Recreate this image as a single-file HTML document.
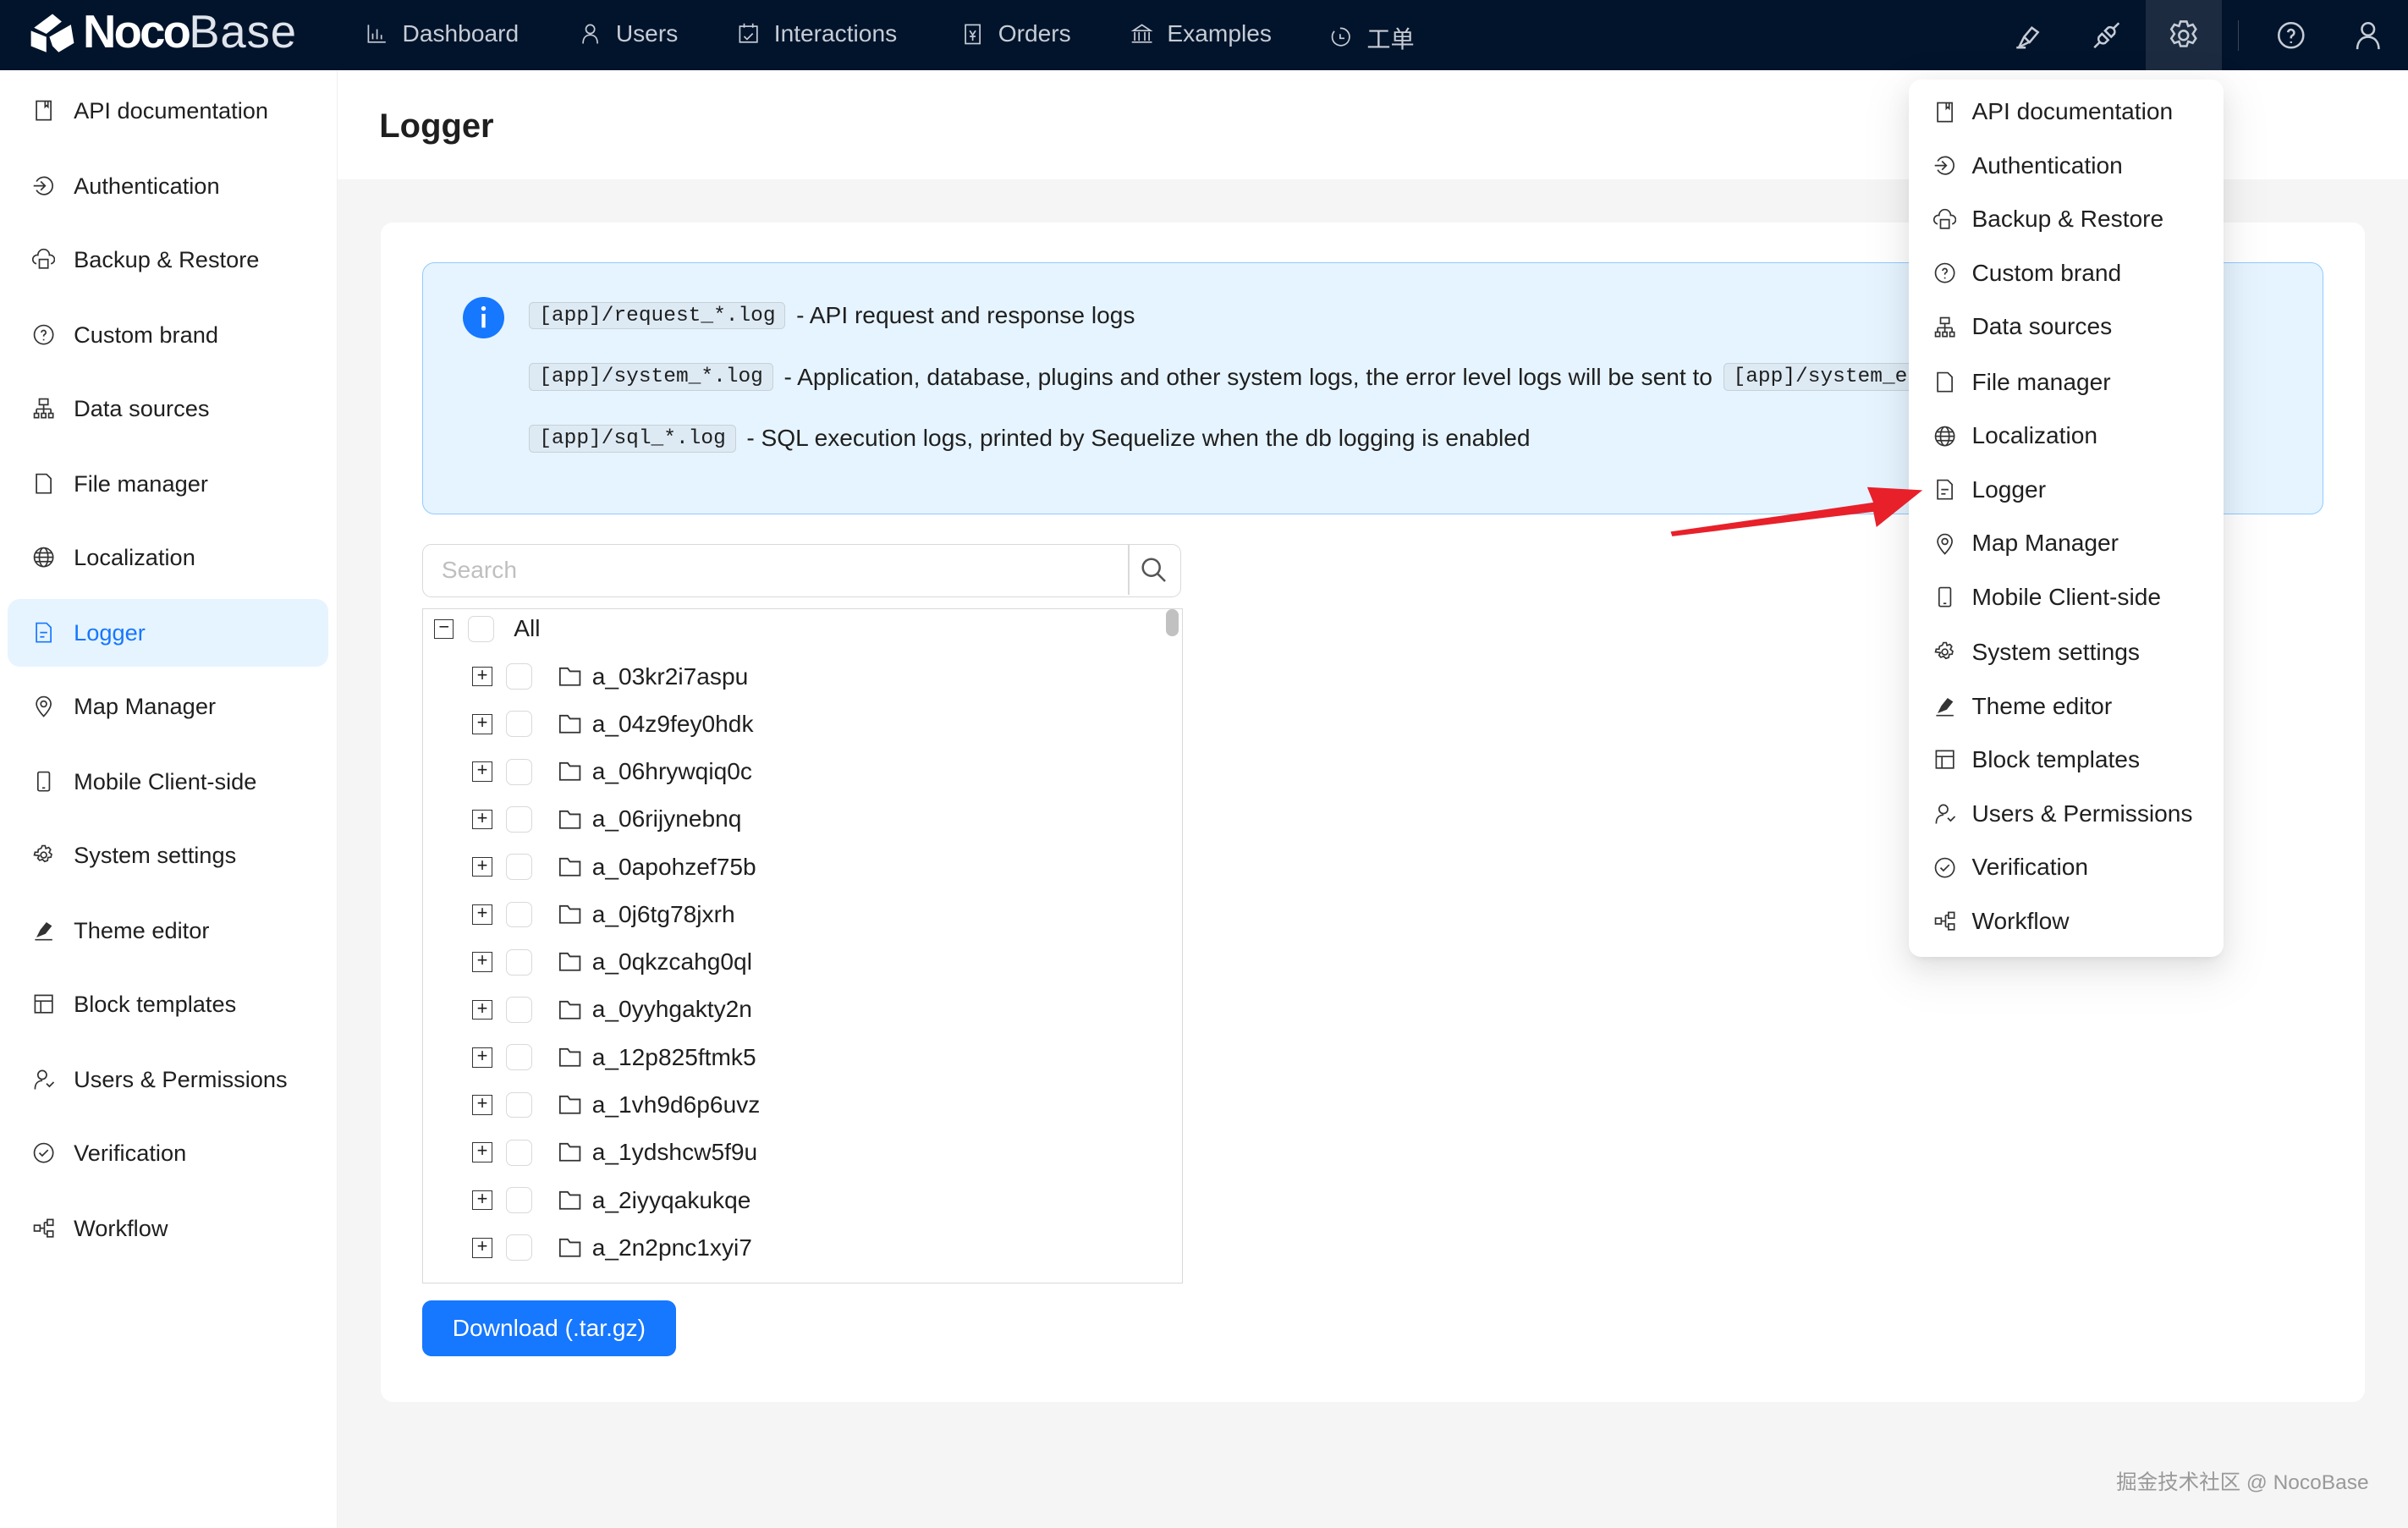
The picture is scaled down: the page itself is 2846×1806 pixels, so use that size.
<!DOCTYPE html>
<html><head><meta charset="utf-8"><style>
*{box-sizing:border-box;margin:0;padding:0}
html,body{width:2846px;height:1806px;overflow:hidden;background:#f5f5f5}
#r{zoom:1.81505;width:1568px;height:995px;position:relative;font-family:"Liberation Sans","Noto Sans CJK SC",sans-serif;color:#1f1f1f;font-size:15px}
.hdr{position:absolute;left:0;top:0;width:1568px;height:46px;background:#02142b}
.logo{position:absolute;left:18px;top:5px;color:#fff;font-size:30px;line-height:32px;white-space:nowrap}
.logo b{font-weight:bold;letter-spacing:-1.5px;margin-left:4px}.logo span{font-weight:normal;color:#dfe4ec;letter-spacing:0.5px}
.nav{position:absolute;top:13px;color:#c6ccd6;font-size:15.5px;display:flex;align-items:center;gap:9px}
.nav svg{width:15px;height:15px}
.hi{position:absolute;top:11px;width:24px;height:24px}
.side{position:absolute;left:0;top:46px;width:220px;height:949px;background:#fff;border-right:1px solid #f0f0f0}
.si{position:absolute;left:5px;width:209px;height:44px;border-radius:8px;display:flex;align-items:center;padding-left:16px;gap:12px}
.si svg,.mi svg{width:15px;height:15px;flex:none}
.si.sel{background:#e6f4ff;color:#1677ff}
.ph{position:absolute;left:220px;top:46px;width:1348px;height:71px;background:#fff}
.ph h1{position:absolute;left:27px;top:24px;font-size:22px;font-weight:bold}
.card{position:absolute;left:248px;top:145px;width:1292px;height:768px;background:#fff;border-radius:8px}
.alert{position:absolute;left:275px;top:171px;width:1238px;height:164px;background:#e6f4ff;border:1px solid #91caff;border-radius:8px;overflow:hidden}
.ln{position:absolute;left:69px;white-space:nowrap;display:flex;align-items:center;gap:7px;font-size:15.5px}
code{font-family:"Liberation Mono",monospace;font-size:13.5px;background:rgba(150,150,150,.1);border:1px solid rgba(100,100,100,.2);border-radius:3px;padding:1px 6px}
.search{position:absolute;left:275px;top:354px;width:494px;height:35px;border:1px solid #d9d9d9;border-radius:6px;background:#fff}
.search span{position:absolute;left:12px;top:8px;color:#bfbfbf;font-size:15.5px}
.search i{position:absolute;left:459px;top:0;width:1px;height:33px;background:#d9d9d9}
.tree{position:absolute;left:275px;top:396px;width:495px;height:440px;border:1px solid #d9d9d9;overflow:hidden;background:#fff}
.row{position:absolute;height:22px;display:flex;align-items:center;font-size:15.5px;white-space:nowrap}
.sw{width:13px;height:13px;border:1px solid #333;display:inline-flex;align-items:center;justify-content:center;font-size:12px;line-height:1;margin-right:9px;font-family:"Liberation Mono",monospace}
.cb{width:17px;height:17px;border:1px solid #d9d9d9;border-radius:4px;margin-right:17px}
.fi{margin-right:7px}
.btn{position:absolute;left:275px;top:847px;width:165px;height:36px;background:#1677ff;border-radius:6px;color:#fff;font-size:15.5px;text-align:center;line-height:36px}
.menu{position:absolute;left:1243px;top:52px;width:205px;height:571px;background:#fff;border-radius:8px;box-shadow:0 6px 16px rgba(0,0,0,.08),0 3px 6px -4px rgba(0,0,0,.12),0 9px 28px 8px rgba(0,0,0,.05)}
.mi{position:absolute;left:16px;display:flex;align-items:center;gap:10px;font-size:15.5px;white-space:nowrap}
</style></head><body><div id="r">
<div class="hdr">
 <div class="logo"><svg width="32" height="30" viewBox="0 0 32 30" style="vertical-align:-5px"><path d="M4 12 L16 3 L22 8 L12 16 Z M2 14 L12 18 L12 28 L2 24 Z M14 18 L28 10 L30 22 L20 28 L16 24 Z" fill="#fff"/></svg><b>Noco</b><span>Base</span></div>
 <div class="nav" style="left:238px"><svg viewBox="0 0 16 16" fill="none" stroke="#c6ccd6"><path d="M2 2v12h12M5 12V8M8 12V5M11 12V9"/></svg>Dashboard</div>
 <div class="nav" style="left:377px"><svg viewBox="0 0 16 16" fill="none" stroke="#c6ccd6"><circle cx="8" cy="5" r="3"/><path d="M3 15c0-4 2-6 5-6s5 2 5 6"/></svg>Users</div>
 <div class="nav" style="left:480px"><svg viewBox="0 0 16 16" fill="none" stroke="#c6ccd6"><rect x="2" y="3" width="12" height="11"/><path d="M5 1v3M11 1v3M5 10l2 2 4-4"/></svg>Interactions</div>
 <div class="nav" style="left:626px"><svg viewBox="0 0 16 16" fill="none" stroke="#c6ccd6"><rect x="3" y="2" width="10" height="13"/><path d="M6 6l2 3 2-3M8 9v4M6 10h4"/></svg>Orders</div>
 <div class="nav" style="left:736px"><svg viewBox="0 0 16 16" fill="none" stroke="#c6ccd6"><path d="M2 6l6-4 6 4zM3 7v6M6 7v6M10 7v6M13 7v6M1 14h14"/></svg>Examples</div>
 <div class="nav" style="left:866px"><svg viewBox="0 0 16 16" fill="none" stroke="#c6ccd6"><path d="M3 4a6 6 0 1 0 4-2"/><path d="M7 6v3h3"/></svg>工单</div>
 <svg class="hi" style="left:1309px" viewBox="0 0 24 24" fill="none" stroke="#c6ccd6" stroke-width="1.4"><path d="M4 20h6M6 19l3-6 5-6 4 3-5 6-6 3zM9 13l4 4"/></svg>
 <svg class="hi" style="left:1360px" viewBox="0 0 24 24" fill="none" stroke="#c6ccd6" stroke-width="1.4"><path d="M4 20l4-4M20 4l-4 4M9 11l4 4-2 2a3 3 0 0 1-4-4zM15 13l-4-4 2-2a3 3 0 0 1 4 4z"/></svg>
 <div style="position:absolute;left:1397px;top:0;width:50px;height:46px;background:#1c2b40"></div>
 <svg class="hi" style="left:1410px" viewBox="0 0 24 24" fill="none" stroke="#c6ccd6" stroke-width="1.4"><circle cx="12" cy="12" r="3"/><path d="M10 3h4l1 3 3-1 2 3-2 3 2 3-2 3-3-1-1 3h-4l-1-3-3 1-2-3 2-3-2-3 2-3 3 1z"/></svg>
 <div style="position:absolute;left:1457px;top:13px;width:1px;height:20px;background:#3a4658"></div>
 <svg class="hi" style="left:1480px" viewBox="0 0 24 24" fill="none" stroke="#c6ccd6" stroke-width="1.4"><circle cx="12" cy="12" r="8"/><path d="M10 10a2 2 0 1 1 3 2c-1 .5-1 1-1 2M12 16v1"/></svg>
 <svg class="hi" style="left:1530px" viewBox="0 0 24 24" fill="none" stroke="#c6ccd6" stroke-width="1.4"><circle cx="12" cy="8" r="4"/><path d="M5 21c0-5 3-8 7-8s7 3 7 8"/></svg>
</div>
<div class="side">
<div class="si" style="top:4px"><svg viewBox="0 0 16 16" fill="none" stroke="#333"><rect x="3" y="1.5" width="10" height="13"/><path d="M9 1.5v4l1-1 1 1v-4"/></svg>API documentation</div>
<div class="si" style="top:53px"><svg viewBox="0 0 16 16" fill="none" stroke="#333"><path d="M3 5a6 6 0 1 1 0 6M1 8h8M6 5l3 3-3 3"/></svg>Authentication</div>
<div class="si" style="top:101px"><svg viewBox="0 0 16 16" fill="none" stroke="#333"><path d="M3 11a3 3 0 0 1 1-6 4 4 0 0 1 8 0 3 3 0 0 1 1 6"/><rect x="5" y="8" width="6" height="6"/></svg>Backup &amp; Restore</div>
<div class="si" style="top:150px"><svg viewBox="0 0 16 16" fill="none" stroke="#333"><circle cx="8" cy="8" r="6.5"/><path d="M6.5 6.5a1.5 1.5 0 1 1 2 1.4c-.5.3-.5.6-.5 1.3M8 11v1"/></svg>Custom brand</div>
<div class="si" style="top:198px"><svg viewBox="0 0 16 16" fill="none" stroke="#333"><rect x="5" y="1.5" width="6" height="4"/><path d="M8 5.5v3M3 8.5h10M3 8.5v3M8 8.5v3M13 8.5v3"/><rect x="1.5" y="11.5" width="3" height="3"/><rect x="6.5" y="11.5" width="3" height="3"/><rect x="11.5" y="11.5" width="3" height="3"/></svg>Data sources</div>
<div class="si" style="top:247px"><svg viewBox="0 0 16 16" fill="none" stroke="#333"><path d="M3 1.5h7l3 3v10H3z"/></svg>File manager</div>
<div class="si" style="top:295px"><svg viewBox="0 0 16 16" fill="none" stroke="#333"><circle cx="8" cy="8" r="6.5"/><ellipse cx="8" cy="8" rx="3" ry="6.5"/><path d="M1.5 8h13M2.5 5h11M2.5 11h11"/></svg>Localization</div>
<div class="si sel" style="top:344px"><svg viewBox="0 0 16 16" fill="none" stroke="#1677ff"><path d="M3 1.5h7l3 3v10H3z"/><path d="M5.5 8h5M5.5 11h3"/></svg>Logger</div>
<div class="si" style="top:392px"><svg viewBox="0 0 16 16" fill="none" stroke="#333"><path d="M8 15s5-5 5-8.5a5 5 0 0 0-10 0C3 10 8 15 8 15z"/><circle cx="8" cy="6.5" r="2"/></svg>Map Manager</div>
<div class="si" style="top:441px"><svg viewBox="0 0 16 16" fill="none" stroke="#333"><rect x="4" y="1.5" width="8" height="13" rx="1"/><path d="M7 12.5h2"/></svg>Mobile Client-side</div>
<div class="si" style="top:489px"><svg viewBox="0 0 16 16" fill="none" stroke="#333"><circle cx="8" cy="8" r="2"/><path d="M7 1.5h2l.5 2 2-.8 1.3 1.5-1 2 1.7 1.3-.5 2-2 .2-.3 2.1-2 .7-1.5-1.5-2 .7-1.3-1.5 1-1.8L1.5 8l.5-2 2 .1.3-2 2-.8z"/></svg>System settings</div>
<div class="si" style="top:538px"><svg viewBox="0 0 16 16" fill="none" stroke="#333"><path d="M2 14.5h12M4 12l2-4 4-5 3 2-4 5z" fill="#333"/></svg>Theme editor</div>
<div class="si" style="top:586px"><svg viewBox="0 0 16 16" fill="none" stroke="#333"><rect x="2" y="2" width="12" height="12"/><path d="M2 6h12M6 6v8"/></svg>Block templates</div>
<div class="si" style="top:635px"><svg viewBox="0 0 16 16" fill="none" stroke="#333"><circle cx="7" cy="5" r="3"/><path d="M2 15c0-4 2-6 5-6M10 11l2 2 3-3"/></svg>Users &amp; Permissions</div>
<div class="si" style="top:683px"><svg viewBox="0 0 16 16" fill="none" stroke="#333"><circle cx="8" cy="8" r="6.5"/><path d="M5 8l2 2 4-4"/></svg>Verification</div>
<div class="si" style="top:732px"><svg viewBox="0 0 16 16" fill="none" stroke="#333"><rect x="1.5" y="6" width="4" height="4"/><rect x="10.5" y="2" width="4" height="4"/><rect x="10.5" y="10" width="4" height="4"/><path d="M5.5 8h3M8.5 4v8M8.5 4h2M8.5 12h2"/></svg>Workflow</div>
</div>
<div class="ph"><h1>Logger</h1></div>
<div class="card"></div>
<div class="alert">
 <svg style="position:absolute;left:26px;top:22px" width="27" height="27" viewBox="0 0 27 27"><circle cx="13.5" cy="13.5" r="13.5" fill="#1677ff"/><rect x="12.3" y="11" width="2.4" height="9" fill="#fff"/><circle cx="13.5" cy="7.5" r="1.5" fill="#fff"/></svg>
 <div class="ln" style="top:25px"><code>[app]/request_*.log</code> - API request and response logs</div>
 <div class="ln" style="top:65px"><code>[app]/system_*.log</code> - Application, database, plugins and other system logs, the error level logs will be sent to <code>[app]/system_error_*.log</code></div>
 <div class="ln" style="top:105px"><code>[app]/sql_*.log</code> - SQL execution logs, printed by Sequelize when the db logging is enabled</div>
</div>
<div class="search"><span>Search</span><i></i><svg style="position:absolute;left:467px;top:8px" width="17" height="17" viewBox="0 0 17 17" fill="none" stroke="#555" stroke-width="1.4"><circle cx="7" cy="7" r="5.5"/><path d="M11 11l5 5"/></svg></div>
<div class="tree">
 <div style="position:absolute;right:2px;top:0;width:8px;height:18px;border-radius:4px;background:#c1c1c1"></div>
 <div class="row" style="left:7px;top:2px"><span class="sw">−</span><span class="cb" style="margin-right:13px"></span>All</div>
 <div class="row" style="left:32px;top:33px"><span class="sw">+</span><span class="cb"></span><svg class="fi" width="15" height="13" viewBox="0 0 15 13" fill="none" stroke="#333"><path d="M1 1h5l1.5 2H14v9H1z"/></svg>a_03kr2i7aspu</div>
 <div class="row" style="left:32px;top:64px"><span class="sw">+</span><span class="cb"></span><svg class="fi" width="15" height="13" viewBox="0 0 15 13" fill="none" stroke="#333"><path d="M1 1h5l1.5 2H14v9H1z"/></svg>a_04z9fey0hdk</div>
 <div class="row" style="left:32px;top:95px"><span class="sw">+</span><span class="cb"></span><svg class="fi" width="15" height="13" viewBox="0 0 15 13" fill="none" stroke="#333"><path d="M1 1h5l1.5 2H14v9H1z"/></svg>a_06hrywqiq0c</div>
 <div class="row" style="left:32px;top:126px"><span class="sw">+</span><span class="cb"></span><svg class="fi" width="15" height="13" viewBox="0 0 15 13" fill="none" stroke="#333"><path d="M1 1h5l1.5 2H14v9H1z"/></svg>a_06rijynebnq</div>
 <div class="row" style="left:32px;top:157px"><span class="sw">+</span><span class="cb"></span><svg class="fi" width="15" height="13" viewBox="0 0 15 13" fill="none" stroke="#333"><path d="M1 1h5l1.5 2H14v9H1z"/></svg>a_0apohzef75b</div>
 <div class="row" style="left:32px;top:188px"><span class="sw">+</span><span class="cb"></span><svg class="fi" width="15" height="13" viewBox="0 0 15 13" fill="none" stroke="#333"><path d="M1 1h5l1.5 2H14v9H1z"/></svg>a_0j6tg78jxrh</div>
 <div class="row" style="left:32px;top:219px"><span class="sw">+</span><span class="cb"></span><svg class="fi" width="15" height="13" viewBox="0 0 15 13" fill="none" stroke="#333"><path d="M1 1h5l1.5 2H14v9H1z"/></svg>a_0qkzcahg0ql</div>
 <div class="row" style="left:32px;top:250px"><span class="sw">+</span><span class="cb"></span><svg class="fi" width="15" height="13" viewBox="0 0 15 13" fill="none" stroke="#333"><path d="M1 1h5l1.5 2H14v9H1z"/></svg>a_0yyhgakty2n</div>
 <div class="row" style="left:32px;top:281px"><span class="sw">+</span><span class="cb"></span><svg class="fi" width="15" height="13" viewBox="0 0 15 13" fill="none" stroke="#333"><path d="M1 1h5l1.5 2H14v9H1z"/></svg>a_12p825ftmk5</div>
 <div class="row" style="left:32px;top:312px"><span class="sw">+</span><span class="cb"></span><svg class="fi" width="15" height="13" viewBox="0 0 15 13" fill="none" stroke="#333"><path d="M1 1h5l1.5 2H14v9H1z"/></svg>a_1vh9d6p6uvz</div>
 <div class="row" style="left:32px;top:343px"><span class="sw">+</span><span class="cb"></span><svg class="fi" width="15" height="13" viewBox="0 0 15 13" fill="none" stroke="#333"><path d="M1 1h5l1.5 2H14v9H1z"/></svg>a_1ydshcw5f9u</div>
 <div class="row" style="left:32px;top:374px"><span class="sw">+</span><span class="cb"></span><svg class="fi" width="15" height="13" viewBox="0 0 15 13" fill="none" stroke="#333"><path d="M1 1h5l1.5 2H14v9H1z"/></svg>a_2iyyqakukqe</div>
 <div class="row" style="left:32px;top:405px"><span class="sw">+</span><span class="cb"></span><svg class="fi" width="15" height="13" viewBox="0 0 15 13" fill="none" stroke="#333"><path d="M1 1h5l1.5 2H14v9H1z"/></svg>a_2n2pnc1xyi7</div>
 <div class="row" style="left:32px;top:436px"><span class="sw">+</span><span class="cb"></span></div>
</div>
<div class="btn">Download (.tar.gz)</div>
<div class="menu">
<div class="mi" style="top:12px"><svg viewBox="0 0 16 16" fill="none" stroke="#333"><rect x="3" y="1.5" width="10" height="13"/><path d="M9 1.5v4l1-1 1 1v-4"/></svg>API documentation</div>
<div class="mi" style="top:47px"><svg viewBox="0 0 16 16" fill="none" stroke="#333"><path d="M3 5a6 6 0 1 1 0 6M1 8h8M6 5l3 3-3 3"/></svg>Authentication</div>
<div class="mi" style="top:82px"><svg viewBox="0 0 16 16" fill="none" stroke="#333"><path d="M3 11a3 3 0 0 1 1-6 4 4 0 0 1 8 0 3 3 0 0 1 1 6"/><rect x="5" y="8" width="6" height="6"/></svg>Backup &amp; Restore</div>
<div class="mi" style="top:117px"><svg viewBox="0 0 16 16" fill="none" stroke="#333"><circle cx="8" cy="8" r="6.5"/><path d="M6.5 6.5a1.5 1.5 0 1 1 2 1.4c-.5.3-.5.6-.5 1.3M8 11v1"/></svg>Custom brand</div>
<div class="mi" style="top:152px"><svg viewBox="0 0 16 16" fill="none" stroke="#333"><rect x="5" y="1.5" width="6" height="4"/><path d="M8 5.5v3M3 8.5h10M3 8.5v3M8 8.5v3M13 8.5v3"/><rect x="1.5" y="11.5" width="3" height="3"/><rect x="6.5" y="11.5" width="3" height="3"/><rect x="11.5" y="11.5" width="3" height="3"/></svg>Data sources</div>
<div class="mi" style="top:188px"><svg viewBox="0 0 16 16" fill="none" stroke="#333"><path d="M3 1.5h7l3 3v10H3z"/></svg>File manager</div>
<div class="mi" style="top:223px"><svg viewBox="0 0 16 16" fill="none" stroke="#333"><circle cx="8" cy="8" r="6.5"/><ellipse cx="8" cy="8" rx="3" ry="6.5"/><path d="M1.5 8h13M2.5 5h11M2.5 11h11"/></svg>Localization</div>
<div class="mi" style="top:258px"><svg viewBox="0 0 16 16" fill="none" stroke="#333"><path d="M3 1.5h7l3 3v10H3z"/><path d="M5.5 8h5M5.5 11h3"/></svg>Logger</div>
<div class="mi" style="top:293px"><svg viewBox="0 0 16 16" fill="none" stroke="#333"><path d="M8 15s5-5 5-8.5a5 5 0 0 0-10 0C3 10 8 15 8 15z"/><circle cx="8" cy="6.5" r="2"/></svg>Map Manager</div>
<div class="mi" style="top:328px"><svg viewBox="0 0 16 16" fill="none" stroke="#333"><rect x="4" y="1.5" width="8" height="13" rx="1"/><path d="M7 12.5h2"/></svg>Mobile Client-side</div>
<div class="mi" style="top:364px"><svg viewBox="0 0 16 16" fill="none" stroke="#333"><circle cx="8" cy="8" r="2"/><path d="M7 1.5h2l.5 2 2-.8 1.3 1.5-1 2 1.7 1.3-.5 2-2 .2-.3 2.1-2 .7-1.5-1.5-2 .7-1.3-1.5 1-1.8L1.5 8l.5-2 2 .1.3-2 2-.8z"/></svg>System settings</div>
<div class="mi" style="top:399px"><svg viewBox="0 0 16 16" fill="none" stroke="#333"><path d="M2 14.5h12M4 12l2-4 4-5 3 2-4 5z" fill="#333"/></svg>Theme editor</div>
<div class="mi" style="top:434px"><svg viewBox="0 0 16 16" fill="none" stroke="#333"><rect x="2" y="2" width="12" height="12"/><path d="M2 6h12M6 6v8"/></svg>Block templates</div>
<div class="mi" style="top:469px"><svg viewBox="0 0 16 16" fill="none" stroke="#333"><circle cx="7" cy="5" r="3"/><path d="M2 15c0-4 2-6 5-6M10 11l2 2 3-3"/></svg>Users &amp; Permissions</div>
<div class="mi" style="top:504px"><svg viewBox="0 0 16 16" fill="none" stroke="#333"><circle cx="8" cy="8" r="6.5"/><path d="M5 8l2 2 4-4"/></svg>Verification</div>
<div class="mi" style="top:539px"><svg viewBox="0 0 16 16" fill="none" stroke="#333"><rect x="1.5" y="6" width="4" height="4"/><rect x="10.5" y="2" width="4" height="4"/><rect x="10.5" y="10" width="4" height="4"/><path d="M5.5 8h3M8.5 4v8M8.5 4h2M8.5 12h2"/></svg>Workflow</div>
</div>
<svg style="position:absolute;left:1080px;top:305px" width="180" height="50" viewBox="0 0 180 50"><path d="M8 41 L140 22 L136 12 L172 14 L142 38 L140 28 L9 44 Z" fill="#e8202a"/></svg>
<div style="position:absolute;left:1378px;top:955px;font-size:13.5px;color:#999">掘金技术社区 @ NocoBase</div>
</div></body></html>
